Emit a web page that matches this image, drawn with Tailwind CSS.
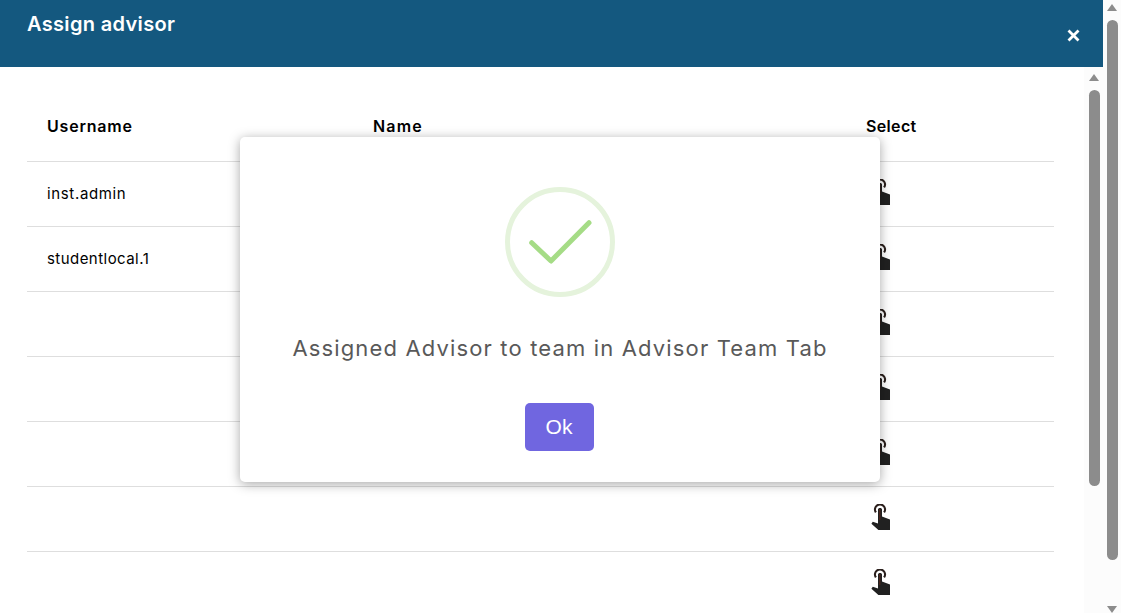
<!DOCTYPE html>
<html lang="en">
  <head>
    <meta charset="UTF-8" />
    <title>Assign advisor</title>
    <script src="https://cdn.jsdelivr.net/npm/@tailwindcss/browser@4"></script>
  </head>
  <body class="bg-white font-['Inter',sans-serif] overflow-hidden">
    <svg class="hidden">
      <symbol id="touch" viewBox="0 0 20 26">
        <path d="M5.9 8.4 A5 5 0 1 1 14.1 8.4" fill="none" stroke="#2a1f1c" stroke-width="2.2" />
        <path d="M8 5.4 C8 3.4 12 3.4 12 5.4 L12 12.6 L20 15.4 L20 26 L8.4 26 L1.4 19.8 L2.8 17.8 L8 19.6 Z" fill="#212121" />
        <path d="M9.8 5 L9.8 16" stroke="#6b2a1a" stroke-width="0.8" />
      </symbol>
    </svg>
    <div class="relative flex h-[613px] w-[1121px] overflow-hidden">
      <!-- Panel -->
      <div class="flex w-[1103px] flex-col">
        <header class="flex h-[67px] shrink-0 justify-between bg-[#14587f] pl-[27px] pr-[23px] text-white">
          <h1 class="pt-[10px] text-[20px] leading-[28px] font-semibold tracking-[0.33px]">Assign advisor</h1>
          <svg class="mt-[29px] h-[13px] w-[13px]" viewBox="0 0 13 13">
            <path d="M1.5 1.5 L11.5 11.5 M11.5 1.5 L1.5 11.5" stroke="#fff" stroke-width="2.8" />
          </svg>
        </header>
        <div class="flex min-h-0 flex-1">
          <div class="min-w-0 flex-1 pl-[27px] pr-[30px] pt-[24px]">
            <table class="w-[1027px] table-fixed border-collapse text-left text-black">
              <thead>
                <tr class="h-[70px] border-b border-[#dedede] text-[16px] font-semibold tracking-[0.8px]">
                  <th class="w-[346px] pl-[20px] pt-[1px] font-semibold">Username</th>
                  <th class="w-[493px] pt-[1px] font-semibold tracking-[1.2px]">Name</th>
                  <th class="pt-[1px] font-semibold tracking-[0.35px]">Select</th>
                </tr>
              </thead>
              <tbody class="text-[15px] tracking-[0.45px]">
                <tr class="h-[65px] border-b border-[#dedede]">
                  <td class="pl-[20px] pt-[2px] tracking-[0.65px]">inst.admin</td>
                  <td></td>
                  <td class="pl-[4px]"><svg class="-mt-[4px] h-[26px] w-[20px]"><use href="#touch" /></svg></td>
                </tr>
                <tr class="h-[65px] border-b border-[#dedede]">
                  <td class="pl-[20px] pt-[2px]">studentlocal.1</td>
                  <td></td>
                  <td class="pl-[4px]"><svg class="-mt-[4px] h-[26px] w-[20px]"><use href="#touch" /></svg></td>
                </tr>
                <tr class="h-[65px] border-b border-[#dedede]">
                  <td></td>
                  <td></td>
                  <td class="pl-[4px]"><svg class="-mt-[4px] h-[26px] w-[20px]"><use href="#touch" /></svg></td>
                </tr>
                <tr class="h-[65px] border-b border-[#dedede]">
                  <td></td>
                  <td></td>
                  <td class="pl-[4px]"><svg class="-mt-[4px] h-[26px] w-[20px]"><use href="#touch" /></svg></td>
                </tr>
                <tr class="h-[65px] border-b border-[#dedede]">
                  <td></td>
                  <td></td>
                  <td class="pl-[4px]"><svg class="-mt-[4px] h-[26px] w-[20px]"><use href="#touch" /></svg></td>
                </tr>
                <tr class="h-[65px] border-b border-[#dedede]">
                  <td></td>
                  <td></td>
                  <td class="pl-[4px]"><svg class="-mt-[4px] h-[26px] w-[20px]"><use href="#touch" /></svg></td>
                </tr>
                <tr class="h-[65px] border-b border-[#dedede]">
                  <td></td>
                  <td></td>
                  <td class="pl-[4px]"><svg class="-mt-[4px] h-[26px] w-[20px]"><use href="#touch" /></svg></td>
                </tr>
              </tbody>
            </table>
          </div>
          <!-- Inner scrollbar -->
          <div class="flex w-[19px] shrink-0 flex-col items-center bg-[#fcfcfc] pt-[7px] pl-[1px]">
            <div class="h-0 w-0 border-x-[5px] border-b-[7px] border-x-transparent border-b-[#8c8c8c]"></div>
            <div class="mt-[9px] h-[396px] w-[11px] rounded-full bg-[#8c8c8c]"></div>
          </div>
        </div>
      </div>
      <!-- Outer scrollbar -->
      <div class="flex w-[18px] shrink-0 flex-col items-center bg-[#fcfcfc] pt-[4px]">
        <div class="h-0 w-0 border-x-[5px] border-b-[7px] border-x-transparent border-b-[#8c8c8c]"></div>
        <div class="mt-[9px] h-[540px] w-[11px] rounded-full bg-[#8c8c8c]"></div>
        <div class="mt-auto h-0 w-0 border-x-[5px] border-t-[7px] border-x-transparent border-t-[#8c8c8c]"></div>
      </div>
      <!-- Alert -->
      <div class="absolute left-[240px] top-[137px] flex h-[345px] w-[640px] flex-col items-center rounded-[5px] bg-white shadow-[0_2px_12px_rgba(0,0,0,0.35)]">
        <svg class="mt-[50px] h-[110px] w-[110px]" viewBox="0 0 110 110">
          <circle cx="55" cy="55" r="52.5" fill="none" stroke="#e5f3dc" stroke-width="5" />
          <path d="M26.7 55.7 L46 74 L84 35.7" fill="none" stroke="#a5dc86" stroke-width="5" stroke-linecap="round" stroke-linejoin="round" />
        </svg>
        <p class="mt-[35px] text-[22px] leading-[33px] tracking-[1.15px] text-[#595959]">Assigned Advisor to team in Advisor Team Tab</p>
        <button class="mt-[38px] mr-[2px] h-[48px] w-[69px] rounded-[5px] bg-[#7066e0] font-['Liberation_Sans',sans-serif] text-[21px] text-white">Ok</button>
      </div>
    </div>
  </body>
</html>
